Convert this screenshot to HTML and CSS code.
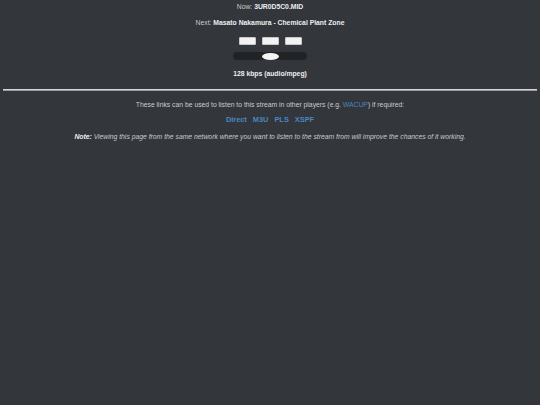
FILE: index.html
```html
<!DOCTYPE html>
<html>
<head>
<meta charset="utf-8">
<link rel="stylesheet" href="styles.css">
</head>
<body>
<div class="page">
  <div class="now">Now: <b>3UR0D5C0.MID</b></div>
  <div class="next">Next: <b>Masato Nakamura - Chemical Plant Zone</b></div>
  <div class="controls">
    <span class="btn"></span><span class="btn"></span><span class="btn"></span>
  </div>
  <div class="slider"><span class="thumb"></span></div>
  <div class="bitrate"><b>128 kbps (audio/mpeg)</b></div>
  <hr class="rule">
  <div class="info">These links can be used to listen to this stream in other players (e.g. <a class="inline" href="#">WACUP</a>) if required:</div>
  <div class="links"><a href="#">Direct</a><a href="#">M3U</a><a href="#">PLS</a><a href="#">XSPF</a></div>
  <div class="note"><b>Note:</b> Viewing this page from the same network where you want to listen to the stream from will improve the chances of it working.</div>
</div>
</body>
</html>
```
FILE: styles.css
```css
html, body {
  margin: 0;
  padding: 0;
  background: #33363b;
}
body {
  font-family: "Liberation Sans", Arial, sans-serif;
  color: #c9cbce;
  font-size: 6.8px;
  line-height: 8px;
}
.page {
  display: flex;
  flex-direction: column;
  align-items: center;
  text-align: center;
}
b { color: #eceef0; font-weight: bold; }
.now { margin-top: 3px; }
.next { margin-top: 8px; }
.controls {
  margin-top: 10px;
  display: flex;
  gap: 6px;
}
.btn {
  width: 15px;
  height: 6px;
  background: #f2f2f2;
  border: 1px solid #c8c8c8;
  border-radius: 1px;
}
.slider {
  margin-top: 7px;
  width: 74px;
  height: 8px;
  border-radius: 4px;
  background: #212327;
  display: flex;
  justify-content: center;
  align-items: center;
}
.thumb {
  width: 17px;
  height: 7px;
  border-radius: 50%;
  background: #f4f4f4;
  margin-left: 1px;
}
.bitrate { margin-top: 10px; }
.rule {
  align-self: stretch;
  margin: 11px 3px 0;
  border: 0;
  height: 1px;
  background: #d8d8d8;
  border-bottom: 1px solid #9a9a9a;
}
.info { margin-top: 10px; }
a { color: #4a86c0; text-decoration: none; }
.links {
  margin-top: 6px;
  display: flex;
  gap: 6px;
  font-size: 7.4px;
  line-height: 10px;
  font-weight: bold;
}
.links a { color: #4a86c0; }
.note {
  margin-top: 8px;
  font-style: italic;
}
```
